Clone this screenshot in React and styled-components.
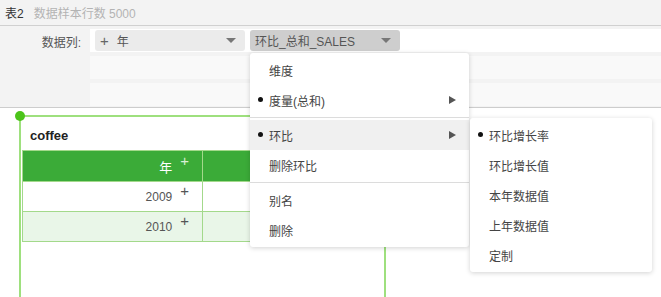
import React from "react";
import styled, { createGlobalStyle } from "styled-components";

const GlobalStyle = createGlobalStyle`
  html, body {
    margin: 0;
    padding: 0;
    overflow: hidden;
  }
  body {
    font-family: "Liberation Sans", "Noto Sans CJK SC", sans-serif;
    font-size: 12px;
    color: #333;
  }
`;

const mainItems = [
  { label: "维度" },
  { label: "度量(总和)", dot: true, arrow: true },
  { sep: true },
  { label: "环比", dot: true, arrow: true, active: true },
  { label: "删除环比" },
  { sep: true },
  { label: "别名" },
  { label: "删除" },
];

const subItems = [
  { label: "环比增长率", dot: true },
  { label: "环比增长值" },
  { label: "本年数据值" },
  { label: "上年数据值" },
  { label: "定制" },
];

const rows = [
  { year: "2009", alt: false },
  { year: "2010", alt: true },
];

function App() {
  return (
    <Page>
      <GlobalStyle />
      <TopBar>
        <TableName>表2</TableName>
        <SampleInfo>数据样本行数 5000</SampleInfo>
      </TopBar>

      <Config>
        <FieldLabel>数据列:</FieldLabel>
        <Slots>
          <Slot $white>
            <Pill>
              <PillText>
                <PlusMark>+</PlusMark>年
              </PillText>
              <Caret />
            </Pill>
            <Pill $active>
              <PillText>环比_总和_SALES</PillText>
              <Caret />
            </Pill>
          </Slot>
          <Slot />
          <Slot />
        </Slots>
      </Config>

      <Canvas>
        <Widget>
          <Handle />
          <WidgetTitle>coffee</WidgetTitle>
          <Table>
            <HeadRow>
              <Cell $head>
                年<CellPlus $head>+</CellPlus>
              </Cell>
              <Cell $head />
            </HeadRow>
            {rows.map((r) => (
              <Row key={r.year} $alt={r.alt}>
                <Cell>
                  {r.year}
                  <CellPlus>+</CellPlus>
                </Cell>
                <Cell />
              </Row>
            ))}
          </Table>
        </Widget>
      </Canvas>

      <Menu>
        {mainItems.map((item, i) =>
          item.sep ? (
            <Separator key={i} />
          ) : (
            <MenuItem key={i} $active={item.active}>
              {item.dot ? <Dot /> : null}
              <span>{item.label}</span>
              {item.arrow ? <Arrow /> : null}
            </MenuItem>
          )
        )}
      </Menu>

      <SubMenu>
        {subItems.map((item, i) => (
          <MenuItem key={i}>
            {item.dot ? <Dot /> : null}
            <span>{item.label}</span>
          </MenuItem>
        ))}
      </SubMenu>
    </Page>
  );
}

export default App;

const Page = styled.div`
  position: relative;
  width: 661px;
  height: 297px;
  overflow: hidden;
  background: #fff;
  display: flex;
  flex-direction: column;
`;

const TopBar = styled.div`
  height: 25px;
  flex-shrink: 0;
  display: flex;
  align-items: center;
  padding-left: 5px;
  background: #f3f3f3;
  border-bottom: 1px solid #d0d0d0;
`;

const TableName = styled.span`
  color: #333;
`;

const SampleInfo = styled.span`
  margin-left: 10px;
  color: #b3b3b3;
`;

const Config = styled.div`
  height: 81px;
  flex-shrink: 0;
  display: flex;
  background: #f3f3f3;
  border-bottom: 1px solid #cdcdcd;
`;

const FieldLabel = styled.div`
  width: 81px;
  padding-top: 7px;
  padding-right: 9px;
  text-align: right;
  color: #555;
  flex-shrink: 0;
`;

const Slots = styled.div`
  flex: 1;
  display: flex;
  flex-direction: column;
  gap: 4px;
  padding-top: 3px;
`;

const Slot = styled.div`
  height: 23px;
  display: flex;
  align-items: center;
  gap: 5px;
  padding-left: 5px;
  background: ${(p) => (p.$white ? "#fff" : "#f9f9f9")};
`;

const Pill = styled.div`
  width: 150px;
  height: 21px;
  box-sizing: border-box;
  display: flex;
  align-items: center;
  justify-content: space-between;
  padding: 0 9px 0 5px;
  border-radius: 3px;
  background: ${(p) => (p.$active ? "#cecece" : "#ebebeb")};
  color: #555;
`;

const PillText = styled.span`
  display: flex;
  align-items: center;
  white-space: nowrap;
`;

const PlusMark = styled.span`
  font-size: 15px;
  margin-right: 8px;
  color: #666;
`;

const Caret = styled.span`
  width: 0;
  height: 0;
  border-left: 5px solid transparent;
  border-right: 5px solid transparent;
  border-top: 5px solid #777;
`;

const Canvas = styled.div`
  flex: 1;
  position: relative;
  background: #fff;
  padding: 7px 0 0 19px;
`;

const Widget = styled.div`
  position: relative;
  width: 362px;
  height: 220px;
  border: 2px solid #9ee07e;
  border-bottom: none;
  padding-left: 1px;
`;

const Handle = styled.span`
  position: absolute;
  left: -6px;
  top: -6px;
  width: 10px;
  height: 10px;
  border-radius: 50%;
  background: #4cc41a;
`;

const WidgetTitle = styled.div`
  height: 33px;
  display: flex;
  align-items: center;
  padding-left: 8px;
  padding-top: 3px;
  box-sizing: border-box;
  font-size: 13px;
  font-weight: bold;
  color: #222;
`;

const Table = styled.div`
  display: flex;
  flex-direction: column;
  border-left: 1px solid #a3d98b;
`;

const HeadRow = styled.div`
  display: flex;
  height: 30px;
  background: #3bab38;
  border-top: 1px solid #a3d98b;
  border-bottom: 1px solid #a3d98b;
`;

const Row = styled.div`
  display: flex;
  height: 29px;
  background: ${(p) => (p.$alt ? "#e9f6e8" : "#fff")};
  border-bottom: 1px solid #a3d98b;
`;

const Cell = styled.div`
  width: 180px;
  flex-shrink: 0;
  display: flex;
  align-items: center;
  justify-content: flex-end;
  padding-right: 13px;
  box-sizing: border-box;
  border-right: 1px solid #a3d98b;
  color: ${(p) => (p.$head ? "#fff" : "#555")};
  font-size: ${(p) => (p.$head ? "13px" : "12px")};
  &:last-child {
    flex: 1;
  }
`;

const CellPlus = styled.span`
  position: relative;
  top: -6px;
  margin-left: 8px;
  font-size: 15px;
  color: ${(p) => (p.$head ? "#d8efd6" : "#555")};
`;

const Menu = styled.div`
  position: absolute;
  left: 250px;
  top: 53px;
  width: 219px;
  padding: 2px 0;
  background: #fff;
  border-radius: 3px;
  box-shadow: 0 1px 5px rgba(0, 0, 0, 0.18);
  z-index: 5;
`;

const SubMenu = styled(Menu)`
  left: 470px;
  top: 118px;
  width: 182px;
`;

const MenuItem = styled.div`
  position: relative;
  height: 30px;
  display: flex;
  align-items: center;
  padding-left: 19px;
  color: #444;
  background: ${(p) => (p.$active ? "#f0f0f0" : "transparent")};
`;

const Dot = styled.span`
  position: absolute;
  left: 8px;
  top: 12px;
  width: 5px;
  height: 5px;
  border-radius: 50%;
  background: #111;
`;

const Arrow = styled.span`
  position: absolute;
  right: 13px;
  top: 11px;
  width: 0;
  height: 0;
  border-top: 4px solid transparent;
  border-bottom: 4px solid transparent;
  border-left: 7px solid #555;
`;

const Separator = styled.div`
  height: 1px;
  margin: 2px 0;
  background: #dcdcdc;
`;
